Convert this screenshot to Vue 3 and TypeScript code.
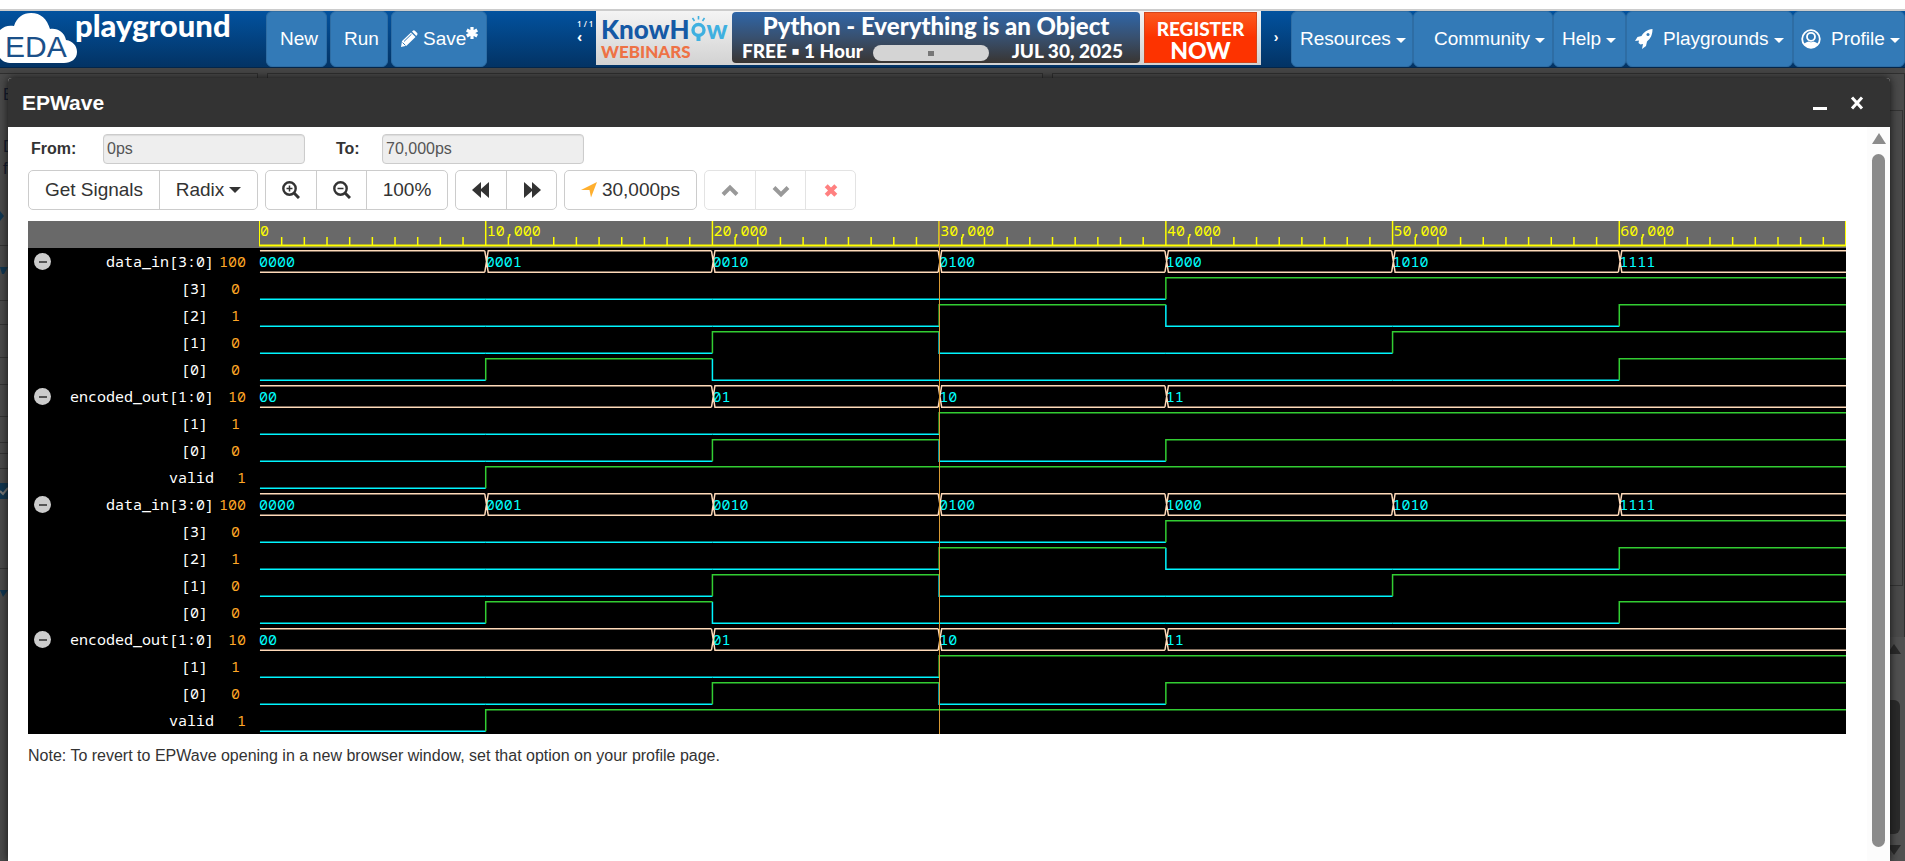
<script setup lang="ts">
interface Span {
  at: number
  text: string
}
interface Signal {
  name: string
  value: string
  kind: 'bus' | 'bit' | 'wire'
  spans?: Span[]
  levels?: string
}

const PERIODS = 7
const STEP = 1000 / PERIODS
const periods = [0, 1, 2, 3, 4, 5, 6]
const ticks = Array.from({ length: 71 }, (_, i) => i).filter((i) => i % 10 !== 0)

const group: Signal[] = [
  {
    name: 'data_in[3:0]',
    value: '100',
    kind: 'bus',
    spans: ['0000', '0001', '0010', '0100', '1000', '1010', '1111'].map((text, at) => ({ at, text })),
  },
  { name: '[3]', value: '0', kind: 'bit', levels: '0000111' },
  { name: '[2]', value: '1', kind: 'bit', levels: '0001001' },
  { name: '[1]', value: '0', kind: 'bit', levels: '0010011' },
  { name: '[0]', value: '0', kind: 'bit', levels: '0100001' },
  {
    name: 'encoded_out[1:0]',
    value: '10',
    kind: 'bus',
    spans: [
      { at: 0, text: '00' },
      { at: 2, text: '01' },
      { at: 3, text: '10' },
      { at: 4, text: '11' },
    ],
  },
  { name: '[1]', value: '1', kind: 'bit', levels: '0001111' },
  { name: '[0]', value: '0', kind: 'bit', levels: '0010111' },
  { name: 'valid', value: '1', kind: 'wire', levels: '0111111' },
]
const signals: Signal[] = [...group, ...group]

function spanEnd(spans: Span[], i: number): number {
  return i + 1 < spans.length ? spans[i + 1].at : PERIODS
}

function spanWidth(spans: Span[], i: number): string {
  return `${((spanEnd(spans, i) - spans[i].at) / PERIODS) * 100}%`
}

function busPath(spans: Span[]): string {
  return spans
    .map((s, i) => {
      const a = s.at * STEP
      const b = spanEnd(spans, i) * STEP
      const left = s.at === 0 ? `M0.6 2.75` : `M${a - 0.6} 24.25L${a + 1.6} 2.75`
      const leftLow = s.at === 0 ? `M0.6 24.25` : `M${a - 0.6} 2.75L${a + 1.6} 24.25`
      const end = spanEnd(spans, i) === PERIODS ? b : b - 0.6
      return `${left}H${end}${leftLow}H${end}`
    })
    .join('')
}

/* A level's colour also covers the edge that leads into it. */
function levelPath(levels: string, level: string): string {
  let d = ''
  const y = (c: string) => (c === '1' ? 2.75 : 24.25)
  for (let i = 0; i < levels.length; i++) {
    if (levels[i] !== level) continue
    const a = i * STEP + (i === 0 ? 0.6 : 0)
    if (i > 0 && levels[i - 1] !== level) d += `M${a} ${y(levels[i - 1])}V${y(level)}`
    else d += `M${a} ${y(level)}`
    d += `H${(i + 1) * STEP}`
  }
  return d
}
</script>

<template>
  <div class="page">
    <header class="topbar">
      <a class="brand" href="#" aria-label="EDA playground">
        <svg class="cloud" viewBox="0 0 78 52" aria-hidden="true">
          <path fill="#fff" d="M0 18C4 14 9 13 14 14C17 5 23 1 31 1C41 1 47 7 50 17C58 16 64 20 66 28C73 29 77 34 77 40C77 47 71 51 64 51H12C6 51 2 49 0 46Z" />
        </svg>
        <span class="eda">EDA</span>
        <span class="playground">playground</span>
      </a>

      <nav class="actions">
        <button class="tab new" type="button">New</button>
        <button class="tab run" type="button">Run</button>
        <button class="tab save" type="button">
          <svg width="18" height="18" viewBox="0 0 18 18" aria-hidden="true">
            <path fill="#fff" d="M1 17L2 11L11 2.500L15.500 7L6.500 15.800ZM12 1.500L13.200.5Q14 0 14.900.8L17.200 3.100Q17.900 4 17.200 4.800L16.300 5.900Z" />
            <path stroke="#337ab7" fill="none" d="M4 11.500L11.500 4.200M2.500 12.500L5.500 15.500" />
          </svg>
          <span>Save</span>
          <svg class="star" width="12" height="12" viewBox="0 0 12 12" aria-hidden="true">
            <path stroke="#fff" stroke-width="3.200" d="M6 0V12M.8 3L11.200 9M.8 9L11.200 3" />
          </svg>
        </button>
      </nav>

      <div class="carousel">
        <div class="pager">
          <span>1 / 1</span>
          <button type="button" aria-label="Previous">‹</button>
        </div>
        <a class="banner" href="#">
          <span class="knowhow">
            <span class="kh"><span>KnowH</span><svg width="17" height="27" viewBox="0 0 17 27" aria-hidden="true">
              <g fill="none" stroke="#3fb0e0">
                <circle cx="8.500" cy="15" r="5.500" stroke-width="3.400" />
                <path stroke-width="4" d="M8.500 21V26" />
                <path stroke-width="1.600" d="M8.500 1V4.500M2.500 3L4.500 6M14.500 3L12.500 6" />
              </g>
            </svg><span class="light">w</span></span>
            <span class="webinars">WEBINARS</span>
          </span>
          <span class="course">
            <span class="course-title">Python - Everything is an Object</span>
            <span class="course-meta">
              <span>FREE ▪ 1 Hour</span>
              <span class="pill"><i></i></span>
              <span class="date">JUL 30, 2025</span>
            </span>
          </span>
          <span class="register"><span>REGISTER</span><span class="now">NOW</span></span>
        </a>
        <button class="next" type="button" aria-label="Next">›</button>
      </div>

      <nav class="menus">
        <button class="tab resources" type="button">Resources<i class="caret"></i></button>
        <button class="tab community" type="button">Community<i class="caret"></i></button>
        <button class="tab help" type="button">Help<i class="caret"></i></button>
        <button class="tab playgrounds" type="button">
          <svg width="18" height="20" viewBox="0 0 18 20" aria-hidden="true">
            <path fill="#fff" d="M17.500 0C12 .5 9 3 6.500 7L2.500 8L0 12L4 11.500L3.500 14L5.500 15.500L8 15L7 20L11 17L12 12.500C15.500 9.500 17.500 6 17.500 0Z" />
            <circle cx="13" cy="5.500" r="1.500" fill="#337ab7" />
          </svg>
          <span>Playgrounds</span><i class="caret"></i>
        </button>
        <button class="tab profile" type="button">
          <svg width="20" height="20" viewBox="0 0 20 20" aria-hidden="true">
            <circle cx="10" cy="10" r="8.800" fill="none" stroke="#fff" stroke-width="1.800" />
            <circle cx="10" cy="7.800" r="4" fill="none" stroke="#fff" stroke-width="1.800" />
            <path fill="#fff" d="M3 15Q4.500 13.300 7.500 12.500Q10 14 12.500 12.500Q15.500 13.300 17 15Q14 19 10 19T3 15Z" />
          </svg>
          <span>Profile</span><i class="caret"></i>
        </button>
      </nav>
    </header>

    <div class="stage">
      <div class="backdrop" aria-hidden="true">
        <div class="panes"><i></i><i></i><i></i></div>
        <svg class="edge" width="8" height="793" viewBox="0 0 8 793">
          <path stroke="#333" d="M0 177.500H8M0 232.500H8M0 256.500H8M0 289.500H8M0 316.500H8M0 348.500H8M0 374.500H8M0 385.500H8M0 400.500H8M0 500.500H8" />
          <path fill="#0f3550" d="M0 143L4 148L0 153ZM0 199H8L4 206H2ZM0 522H8L3 529ZM0 415H8V431H0Z" />
          <path fill="none" stroke="#777" stroke-width="2" d="M0 423L3 426L8 420" />
        </svg>
        <span class="mark first">E</span>
        <span class="mark second">D</span>
        <span class="mark third">fr</span>
        <div class="rail"><i></i></div>
        <div class="under-scroll"><b class="up"></b><i></i><b class="down"></b></div>
      </div>

      <section class="dialog" aria-labelledby="dialog-title">
        <div class="dialog-head">
          <h1 id="dialog-title">EPWave</h1>
          <button type="button" aria-label="Minimize"><svg width="14" height="14" viewBox="0 0 14 14"><path stroke="#fff" stroke-width="3" d="M0 12.500H14" /></svg></button>
          <button type="button" aria-label="Close"><svg width="14" height="14" viewBox="0 0 14 14"><path stroke="#fff" stroke-width="3" d="M2 1.500L12 12.500M12 1.500L2 12.500" /></svg></button>
        </div>

        <div class="dialog-body">
          <div class="content">
            <div class="range">
              <label class="from" for="from">From:</label>
              <input id="from" type="text" value="0ps" disabled />
              <label class="to" for="to">To:</label>
              <input id="to" type="text" value="70,000ps" disabled />
            </div>

            <div class="toolbar">
              <div class="group">
                <button class="signals" type="button">Get Signals</button>
                <button class="radix" type="button">Radix<i class="caret"></i></button>
              </div>
              <div class="group">
                <button class="icon" type="button" aria-label="Zoom in">
                  <svg width="18" height="18" viewBox="0 0 18 18"><g fill="none" stroke="#333"><circle cx="7.500" cy="7.500" r="6.200" stroke-width="2.400" /><path stroke-width="3" d="M11.800 11.800L17 17" /><path stroke-width="1.500" d="M4.500 7.500H10.500M7.500 4.500V10.500" /></g></svg>
                </button>
                <button class="icon" type="button" aria-label="Zoom out">
                  <svg width="18" height="18" viewBox="0 0 18 18"><g fill="none" stroke="#333"><circle cx="7.500" cy="7.500" r="6.200" stroke-width="2.400" /><path stroke-width="3" d="M11.800 11.800L17 17" /><path stroke-width="1.500" d="M4.500 7.500H10.500" /></g></svg>
                </button>
                <button class="full" type="button">100%</button>
              </div>
              <div class="group">
                <button class="icon" type="button" aria-label="Previous edge">
                  <svg width="18" height="18" viewBox="0 0 18 18"><path fill="#333" d="M0 9L9 1V8L17 1V17L9 10V17Z" /></svg>
                </button>
                <button class="icon" type="button" aria-label="Next edge">
                  <svg width="18" height="18" viewBox="0 0 18 18"><path fill="#333" d="M18 9L9 1V8L1 1V17L9 10V17Z" /></svg>
                </button>
              </div>
              <div class="group">
                <button class="time" type="button">
                  <svg width="16" height="16" viewBox="0 0 16 16" aria-hidden="true"><path fill="#ffaf2e" d="M16 0L10 15.500L8.500 8H0Z" /></svg>
                  <span>30,000ps</span>
                </button>
              </div>
              <div class="group muted">
                <button class="icon" type="button" aria-label="Move up" disabled>
                  <svg width="18" height="18" viewBox="0 0 18 18"><path fill="none" stroke="#999" stroke-width="4" d="M2 13.500L9 6.500L16 13.500" /></svg>
                </button>
                <button class="icon" type="button" aria-label="Move down" disabled>
                  <svg width="18" height="18" viewBox="0 0 18 18"><path fill="none" stroke="#999" stroke-width="4" d="M2 6.500L9 13.500L16 6.500" /></svg>
                </button>
                <button class="icon" type="button" aria-label="Remove" disabled>
                  <svg width="14" height="14" viewBox="0 0 14 14"><path stroke="#ff8080" stroke-width="4.200" d="M2.200 2.700L11.800 12.300M11.800 2.700L2.200 12.300" /></svg>
                </button>
              </div>
            </div>

            <div class="wave">
              <div class="ruler">
                <svg class="plot" viewBox="0 0 1000 27" preserveAspectRatio="none" aria-hidden="true">
                  <g stroke="#ff0" fill="none">
                    <path vector-effect="non-scaling-stroke" stroke-width="2" d="M0 24.500H1000M0 0V24.500M1000 0V24.500" />
                    <path v-for="p in periods" :key="p" vector-effect="non-scaling-stroke" stroke-width="1.500" :d="`M${p * STEP} 0V24.500`" />
                    <path v-for="t in ticks" :key="`t${t}`" vector-effect="non-scaling-stroke" stroke-width="1.500" :d="`M${(t * STEP) / 10} 16V24.500`" />
                  </g>
                </svg>
                <span v-for="p in periods" :key="`l${p}`" class="stamp">{{ p === 0 ? '0' : `${p}0,000` }}</span>
              </div>

              <div v-for="(s, i) in signals" :key="i" class="row" :class="s.kind">
                <div class="side">
                  <button v-if="s.kind === 'bus'" class="fold" type="button" :aria-label="`Collapse ${s.name}`"></button>
                  <span class="name">{{ s.name }}</span>
                  <span class="value">{{ s.value }}</span>
                </div>
                <div class="lane">
                  <svg class="plot" viewBox="0 0 1000 27" preserveAspectRatio="none" aria-hidden="true">
                    <g fill="none" stroke-width="1.500">
                      <path v-if="s.spans" vector-effect="non-scaling-stroke" stroke="#ffdab9" :d="busPath(s.spans)" />
                      <template v-if="s.levels">
                        <path vector-effect="non-scaling-stroke" stroke="#00f5ff" :d="levelPath(s.levels, '0')" />
                        <path vector-effect="non-scaling-stroke" stroke="#32cd32" :d="levelPath(s.levels, '1')" />
                      </template>
                    </g>
                  </svg>
                  <template v-if="s.spans">
                    <span v-for="(sp, k) in s.spans" :key="k" class="word" :style="{ width: spanWidth(s.spans, k) }">{{ sp.text }}</span>
                  </template>
                </div>
              </div>
              <i class="cursor"></i>
            </div>

            <p class="note">Note: To revert to EPWave opening in a new browser window, set that option on your profile page.</p>
          </div>

          <div class="scroll" aria-hidden="true"><b></b><i></i></div>
        </div>
      </section>
    </div>
  </div>
</template>

<style>
html,
body {
  margin: 0;
  overflow: hidden;
}
</style>

<style scoped>
.page {
  box-sizing: border-box;
  display: flex;
  flex-direction: column;
  height: 100vh;
  padding-top: 9px;
  background: #fff;
  font-family: "Liberation Sans", Arial, sans-serif;
  font-size: 16px;
  color: #333;
}
button {
  margin: 0;
  padding: 0;
  border: 0;
  background: none;
  font: inherit;
  color: inherit;
}
svg {
  display: block;
  flex: none;
}
.topbar {
  flex: none;
  display: flex;
  height: 56px;
  border-top: 2px solid #ccc;
  border-bottom: 1px solid #04264a;
  background: linear-gradient(#02529f, #033364);
}
.brand {
  position: relative;
  flex: none;
  display: flex;
  width: 266px;
  color: #fff;
  text-decoration: none;
}
.cloud {
  width: 78px;
  height: 52px;
  margin-top: 1px;
}
.eda {
  position: absolute;
  left: 5px;
  top: 20px;
  color: #1b5089;
  font-size: 30px;
  line-height: 32px;
}
.playground {
  margin-left: -3px;
  font-family: Lato, sans-serif;
  font-weight: 900;
  font-size: 31px;
  line-height: 28px;
}
.actions {
  flex: none;
  display: flex;
  gap: 3px;
}
.tab {
  flex: none;
  box-sizing: border-box;
  display: flex;
  align-items: center;
  height: 56px;
  padding: 0 8px;
  border: 1px solid #2e6da4;
  border-radius: 6px;
  background: #337ab7;
  color: #fff;
  font-size: 19px;
  white-space: nowrap;
}
.new,
.run {
  width: 61px;
  padding: 0 0 0 13px;
}
.run {
  width: 58px;
}
.save {
  gap: 5px;
  width: 96px;
}
.star {
  margin: -12px 0 0 -5px;
}
.caret {
  width: 0;
  height: 0;
  margin: 2px 0 0 5px;
  border: 5px solid transparent;
  border-top-color: currentColor;
  border-bottom: 0;
}
.menus {
  flex: none;
  display: flex;
}
.resources {
  width: 122px;
}
.community {
  width: 140px;
  padding-left: 20px;
}
.help {
  width: 73px;
}
.playgrounds {
  width: 167px;
}
.playgrounds span,
.profile span {
  margin-left: 10px;
}
.profile {
  width: 112px;
  padding: 0 0 0 7px;
}
.carousel {
  flex: 1;
  display: flex;
  justify-content: flex-end;
  color: #fff;
}
.pager {
  display: flex;
  flex-direction: column;
  align-items: flex-start;
  width: 19px;
  padding-top: 7px;
  font-family: "Open Sans", sans-serif;
  font-size: 8px;
  font-weight: 600;
  line-height: 11px;
  white-space: nowrap;
}
.pager button,
.next {
  font-size: 14px;
  font-weight: 700;
  line-height: 16px;
}
.next {
  align-self: flex-start;
  width: 30px;
  padding-top: 18px;
  text-align: center;
}
.banner {
  box-sizing: border-box;
  flex: none;
  display: flex;
  width: 665px;
  height: 54px;
  padding: 1px 4px 2px 5px;
  background: linear-gradient(#f4f4f4, #d2d2d2);
  color: #fff;
  text-decoration: none;
  font-family: Lato, sans-serif;
  font-weight: 900;
  white-space: nowrap;
}
.knowhow {
  width: 131px;
}
.kh {
  display: flex;
  height: 31px;
  padding-top: 3px;
  box-sizing: border-box;
  font-size: 26px;
  line-height: 28px;
  color: #1459a5;
}
.kh .light {
  color: #3fb0e0;
}
.webinars {
  display: block;
  color: #ee7245;
  font-size: 17px;
  line-height: 18px;
}
.course {
  box-sizing: border-box;
  display: flex;
  flex-direction: column;
  width: 408px;
  height: 51px;
  padding: 0 10px;
  border-radius: 4px;
  background: linear-gradient(#2f66a8, #38506f 50%, #393532);
}
.course-title {
  font-size: 24px;
  line-height: 28px;
  text-align: center;
}
.course-meta {
  display: flex;
  align-items: center;
  font-size: 19px;
  line-height: 22px;
}
.pill {
  display: flex;
  align-items: center;
  justify-content: center;
  width: 116px;
  height: 16px;
  margin: 4px 0 0 10px;
  border-radius: 8px;
  background: #d4d4d4;
}
.pill i {
  width: 6px;
  height: 5px;
  background: #777;
}
.date {
  margin-left: auto;
  padding-right: 7px;
}
.register {
  box-sizing: border-box;
  display: flex;
  flex-direction: column;
  align-items: center;
  width: 113px;
  height: 51px;
  margin-left: 4px;
  padding-top: 4px;
  border: 1px solid #d3451a;
  background: linear-gradient(#fa5a20, #fd3300 50%);
  font-size: 19px;
  line-height: 23px;
}
.register .now {
  font-size: 23px;
  line-height: 20px;
}
.stage {
  position: relative;
  flex: 1;
  display: flex;
  min-height: 0;
  padding: 10px 15px 0 8px;
  overflow: hidden;
  background: #464646;
}
.backdrop {
  position: absolute;
  inset: 0;
}
.panes {
  display: flex;
  gap: 9px;
  height: 100%;
  padding-top: 5px;
}
.panes i {
  box-sizing: border-box;
  border: 1px solid #2f2f2f;
  background: #4a4a4a;
}
.panes i:nth-child(1) {
  width: 259px;
  margin-left: -1px;
}
.panes i:nth-child(2) {
  width: 776px;
}
.panes i:nth-child(3) {
  flex: 1;
}
.edge {
  position: absolute;
  left: 0;
  top: 0;
}
.rail {
  position: absolute;
  right: 2px;
  top: 42px;
  width: 14px;
  height: 474px;
  border: 1px solid #333;
}
.under-scroll {
  position: absolute;
  right: 0;
  top: 569px;
  bottom: 0;
  width: 15px;
  background: #505050;
}
.under-scroll i {
  position: absolute;
  left: -8px;
  top: 63px;
  width: 18px;
  height: 134px;
  border-radius: 6px;
  background: #2a2a2a;
}
.under-scroll b {
  position: absolute;
  left: -3px;
  border: 7px solid transparent;
}
.under-scroll .up {
  top: 7px;
  border-top: 0;
  border-bottom: 10px solid #2a2a2a;
}
.under-scroll .down {
  top: 208px;
  border-bottom: 0;
  border-top: 10px solid #2a2a2a;
}
.mark {
  position: absolute;
  left: 3px;
  color: #10182c;
  font-size: 16px;
  line-height: 18px;
}
.first {
  top: 18px;
}
.second {
  top: 70px;
}
.third {
  top: 92px;
}
.dialog {
  position: relative;
  flex: 1;
  display: flex;
  flex-direction: column;
  min-width: 0;
  border-radius: 4px 4px 0 0;
  background: #fff;
  box-shadow: 0 0 8px #111;
}
.dialog-head {
  flex: none;
  display: flex;
  align-items: center;
  gap: 23px;
  height: 49px;
  padding: 0 26px 0 14px;
  border-radius: 4px 4px 0 0;
  background: #333;
  color: #fff;
}
.dialog-head h1 {
  flex: 1;
  margin: 0;
  font-size: 21px;
  line-height: 30px;
}
.dialog-body {
  flex: 1;
  display: flex;
  min-height: 0;
}
.content {
  flex: 1;
  min-width: 0;
  padding: 7px 21px 0 20px;
}
.range {
  display: flex;
  align-items: center;
  height: 30px;
}
.range label {
  box-sizing: border-box;
  padding-left: 3px;
  font-weight: 700;
}
.from {
  width: 75px;
}
.to {
  width: 49px;
  margin-left: 28px;
}
.range input {
  box-sizing: border-box;
  width: 202px;
  height: 30px;
  padding: 0 3px;
  border: 1px solid #ccc;
  border-radius: 4px;
  background: #eee;
  box-shadow: inset 0 1px 1px rgba(0, 0, 0, 0.08);
  color: #555;
  font: 16px "Liberation Sans", Arial, sans-serif;
}
.toolbar {
  display: flex;
  gap: 7px;
  margin-top: 6px;
}
.group {
  display: flex;
  border: 1px solid #ccc;
  border-radius: 5px;
}
.group button {
  display: flex;
  align-items: center;
  justify-content: center;
  height: 38px;
  font-size: 19px;
}
.group button + button {
  border-left: 1px solid #ccc;
}
.group .signals {
  width: 130px;
}
.group .radix {
  width: 98px;
}
.radix .caret {
  margin-top: 0;
  border-width: 6px 6px 0;
}
.group .icon {
  width: 50px;
}
.group .full {
  width: 81px;
}
.group .time {
  width: 131px;
  gap: 5px;
}
.group.muted,
.muted button + button {
  border-color: #e3e3e3;
}
.wave {
  position: relative;
  margin-top: 11px;
  background: #000;
  font-family: "Noto Sans Mono", "DejaVu Sans Mono", monospace;
  font-size: 15px;
  line-height: 27px;
}
.ruler {
  position: relative;
  display: flex;
  height: 27px;
  padding-left: 231px;
  background: #696969;
  color: #ff0;
}
.stamp {
  flex: 1;
  padding-left: 1px;
  line-height: 19px;
}
.ruler .plot {
  left: 231px;
  width: calc(100% - 231px);
}
.plot {
  position: absolute;
  left: 0;
  top: 0;
  width: 100%;
  height: 27px;
}
.row {
  display: flex;
  height: 27px;
}
.side {
  flex: none;
  box-sizing: border-box;
  display: flex;
  align-items: center;
  width: 231px;
  padding: 0 13px 0 6px;
  color: #fff;
}
.bit .side {
  padding-right: 19px;
}
.fold {
  width: 17px;
  height: 17px;
  border-radius: 50%;
  background: linear-gradient(#555, #555) center / 8px 2px no-repeat #ccc;
}
.name {
  flex: 1;
  text-align: right;
}
.value {
  width: 32px;
  color: #ffa726;
  text-align: right;
}
.lane {
  position: relative;
  flex: 1;
  display: flex;
}
.lane .word {
  color: #0ff;
  line-height: 26px;
}
.cursor {
  position: absolute;
  top: 0;
  bottom: 0;
  left: calc(231px + (100% - 231px) * 3 / 7);
  width: 1px;
  background: #d99a35;
}
.note {
  margin: 12px 0 0;
  line-height: 20px;
}
.scroll {
  flex: none;
  display: flex;
  flex-direction: column;
  align-items: center;
  gap: 10px;
  width: 23px;
  padding: 6px 0 14px;
  box-sizing: border-box;
  background: #fcfcfc;
}
.scroll b {
  border: 7px solid transparent;
  border-top: 0;
  border-bottom: 11px solid #8b8b8b;
}
.scroll i {
  flex: 1;
  width: 13px;
  border-radius: 7px;
  background: #8b8b8b;
}
</style>
